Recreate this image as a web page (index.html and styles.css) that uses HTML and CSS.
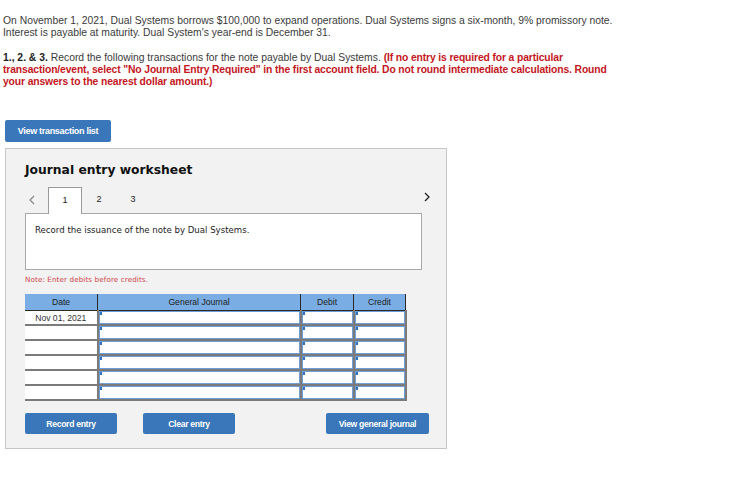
FILE: index.html
```html
<!DOCTYPE html>
<html lang="en">
<head>
<meta charset="utf-8">
<title>Journal entry worksheet</title>
<link rel="stylesheet" href="styles.css">
</head>
<body>
<div class="page">
  <p class="q">On November 1, 2021, Dual Systems borrows $100,000 to expand operations. Dual Systems signs a six-month, 9% promissory note. Interest is payable at maturity. Dual System's year-end is December 31.</p>
  <p class="q q2"><b>1., 2. &amp; 3.</b> Record the following transactions for the note payable by Dual Systems. <span class="req">(If no entry is required for a particular transaction/event, select "No Journal Entry Required" in the first account field. Do not round intermediate calculations. Round your answers to the nearest dollar amount.)</span></p>
  <button class="btn btn-list" type="button">View transaction list</button>

  <section class="ws">
    <h2 class="ws-title">Journal entry worksheet</h2>
    <div class="tabs">
      <span class="nav nav-prev"><svg width="8" height="10" viewBox="0 0 8 10"><polyline points="6,1 2,5 6,9" fill="none" stroke="#8a8a8a" stroke-width="1.3"/></svg></span>
      <span class="tab active">1</span>
      <span class="tab">2</span>
      <span class="tab">3</span>
      <span class="nav nav-next"><svg width="8" height="10" viewBox="0 0 8 10"><polyline points="2,1 6,5 2,9" fill="none" stroke="#222" stroke-width="1.3"/></svg></span>
    </div>
    <div class="desc">Record the issuance of the note by Dual Systems.</div>
    <p class="note">Note: Enter debits before credits.</p>
    <table class="jt">
      <thead>
        <tr><th class="c-date">Date</th><th class="c-gj">General Journal</th><th class="c-dr">Debit</th><th class="c-cr">Credit</th></tr>
      </thead>
      <tbody>
        <tr><td class="d">Nov 01, 2021</td><td class="in"></td><td class="in"></td><td class="in"></td></tr>
        <tr><td class="d"></td><td class="in"></td><td class="in"></td><td class="in"></td></tr>
        <tr><td class="d"></td><td class="in"></td><td class="in"></td><td class="in"></td></tr>
        <tr><td class="d"></td><td class="in"></td><td class="in"></td><td class="in"></td></tr>
        <tr><td class="d"></td><td class="in"></td><td class="in"></td><td class="in"></td></tr>
        <tr><td class="d"></td><td class="in"></td><td class="in"></td><td class="in"></td></tr>
      </tbody>
    </table>
    <div class="actions">
      <button class="btn btn-rec" type="button">Record entry</button>
      <button class="btn btn-clr" type="button">Clear entry</button>
      <button class="btn btn-gen" type="button">View general journal</button>
    </div>
  </section>
</div>
</body>
</html>
```
FILE: styles.css
```css
html, body {
  margin: 0;
  padding: 0;
  background: #fff;
}

.page {
  padding: 15px 0 0 3px;
  font-family: "Liberation Sans", Arial, sans-serif;
}

.q {
  width: 622px;
  margin: 0;
  font-size: 10.35px;
  line-height: 12px;
  color: #3a3a3a;
}

.q2 {
  margin-top: 13px;
}

.q b {
  color: #222;
}

.req {
  color: #c4161c;
  font-weight: bold;
  letter-spacing: -0.13px;
}

.btn {
  display: block;
  border: none;
  border-radius: 2px;
  background: #3a76ba;
  color: #fff;
  font-family: "Liberation Sans", Arial, sans-serif;
  font-weight: bold;
  font-size: 8.6px;
  letter-spacing: -0.3px;
  padding: 0;
  cursor: pointer;
}

.btn-list {
  margin: 32px 0 0 2px;
  width: 106px;
  height: 22px;
  font-size: 9px;
}

.ws {
  box-sizing: border-box;
  width: 442px;
  height: 301px;
  margin: 6px 0 0 2px;
  padding: 0 0 0 19px;
  border: 1px solid #c6c6c6;
  background: #f2f2f2;
}

.ws-title {
  margin: 0;
  padding-top: 13px;
  font-family: "DejaVu Sans", Verdana, sans-serif;
  font-size: 12.3px;
  line-height: 16px;
  font-weight: bold;
  color: #111;
}

.tabs {
  display: flex;
  align-items: stretch;
  width: 406px;
  height: 26px;
  margin-top: 9px;
}

.nav {
  display: flex;
  align-items: center;
}

.nav-prev {
  width: 23px;
  padding-left: 3px;
  box-sizing: border-box;
}

.nav-next {
  margin-left: auto;
  padding-bottom: 6px;
}

.tab {
  display: flex;
  align-items: center;
  justify-content: center;
  width: 34px;
  font-family: "Liberation Sans", Arial, sans-serif;
  font-size: 9px;
  color: #222;
  box-sizing: border-box;
  padding-bottom: 2px;
}

.tab.active {
  background: #fff;
  border: 1px solid #9a9a9a;
  border-bottom: none;
  margin-bottom: -1px;
  position: relative;
  z-index: 1;
}

.desc {
  box-sizing: border-box;
  width: 397px;
  height: 57px;
  padding: 10px 0 0 9px;
  border: 1px solid #a8a8a8;
  background: #fff;
  font-family: "DejaVu Sans", Verdana, sans-serif;
  font-size: 8.6px;
  line-height: 12px;
  color: #222;
}

.note {
  margin: 5px 0 0 0;
  font-family: "DejaVu Sans", Verdana, sans-serif;
  font-size: 7.2px;
  line-height: 10px;
  color: #d0454a;
  letter-spacing: 0.1px;
}

.jt {
  margin-top: 9px;
  border-collapse: collapse;
  table-layout: fixed;
  width: 377px;
  font-family: "Liberation Sans", Arial, sans-serif;
  font-size: 8.6px;
  color: #333;
}

.jt th {
  height: 16px;
  padding: 0;
  background: #79ade3;
  font-weight: normal;
  color: #222;
  border-left: 1px solid #2a2a2a;
  border-bottom: 1px solid #2a2a2a;
}

.jt th.c-date {
  border-left: none;
}

.jt th.c-cr {
  border-right: 1px solid #2a2a2a;
}

.c-date { width: 72px; }
.c-gj { width: 202px; }
.c-dr { width: 52px; }
.c-cr { width: 51px; }

.jt td {
  height: 13px;
  padding: 0;
  border-bottom: 2px solid #7b7b7b;
}

.jt td.d {
  background: #fff;
  text-align: center;
  color: #333;
}

.jt td.in {
  border-left: 2px solid #7b7b7b;
  background:
    linear-gradient(#2f6fc0, #2f6fc0) no-repeat 1px 1px / 2px 3px,
    #fff;
  box-shadow: inset 0 0 0 1px #6f9dd6;
}

.jt td.in:last-child {
  border-right: 2px solid #7b7b7b;
}

.actions {
  display: flex;
  margin-top: 12px;
}

.btn-rec {
  width: 92px;
  height: 21px;
}

.btn-clr {
  width: 92px;
  height: 21px;
  margin-left: 26px;
}

.btn-gen {
  width: 103px;
  height: 21px;
  margin-left: 91px;
}
```
